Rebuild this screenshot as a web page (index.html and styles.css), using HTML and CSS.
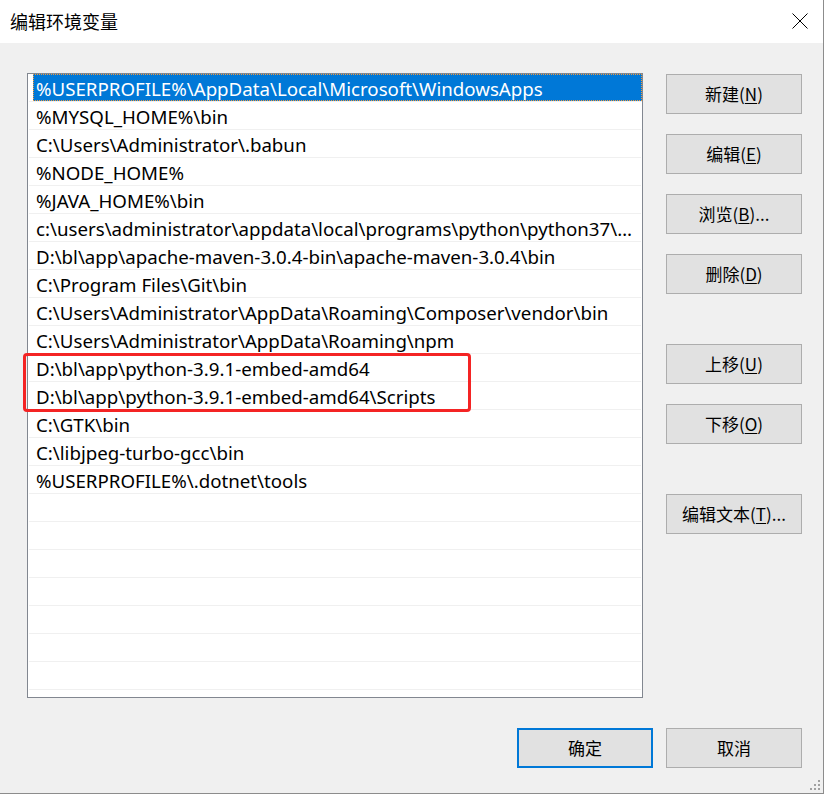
FILE: index.html
```html
<!DOCTYPE html>
<html lang="zh-CN">
<head>
<meta charset="utf-8">
<title>编辑环境变量</title>
<link rel="stylesheet" href="styles.css">
</head>
<body>
<div class="window">
  <div class="titlebar">
    <div class="title">编辑环境变量</div>
    <div class="close">
      <svg width="16" height="16" viewBox="0 0 16 16"><path d="M0.5 0.5 L15.5 15.5 M15.5 0.5 L0.5 15.5" stroke="#000" stroke-width="1" fill="none"/></svg>
    </div>
  </div>
  <div class="content">
    <div class="main">
      <div class="list">
        <div class="row selected"><div class="cell">%USERPROFILE%\AppData\Local\Microsoft\WindowsApps</div></div>
        <div class="row"><div class="cell">%MYSQL_HOME%\bin</div></div>
        <div class="row"><div class="cell">C:\Users\Administrator\.babun</div></div>
        <div class="row"><div class="cell">%NODE_HOME%</div></div>
        <div class="row"><div class="cell">%JAVA_HOME%\bin</div></div>
        <div class="row"><div class="cell">c:\users\administrator\appdata\local\programs\python\python37\Scripts</div></div>
        <div class="row"><div class="cell">D:\bl\app\apache-maven-3.0.4-bin\apache-maven-3.0.4\bin</div></div>
        <div class="row"><div class="cell">C:\Program Files\Git\bin</div></div>
        <div class="row"><div class="cell">C:\Users\Administrator\AppData\Roaming\Composer\vendor\bin</div></div>
        <div class="row"><div class="cell">C:\Users\Administrator\AppData\Roaming\npm</div></div>
        <div class="row"><div class="cell">D:\bl\app\python-3.9.1-embed-amd64</div></div>
        <div class="row"><div class="cell">D:\bl\app\python-3.9.1-embed-amd64\Scripts</div></div>
        <div class="row"><div class="cell">C:\GTK\bin</div></div>
        <div class="row"><div class="cell">C:\libjpeg-turbo-gcc\bin</div></div>
        <div class="row"><div class="cell">%USERPROFILE%\.dotnet\tools</div></div>
        <div class="row"><div class="cell"></div></div>
        <div class="row"><div class="cell"></div></div>
        <div class="row"><div class="cell"></div></div>
        <div class="row"><div class="cell"></div></div>
        <div class="row"><div class="cell"></div></div>
        <div class="row"><div class="cell"></div></div>
        <div class="row"><div class="cell"></div></div>
        <div class="row last"><div class="cell"></div></div>
      </div>
      <div class="side">
        <div class="group">
          <button class="btn">新建(<u>N</u>)</button>
          <button class="btn">编辑(<u>E</u>)</button>
          <button class="btn">浏览(<u>B</u>)...</button>
          <button class="btn">删除(<u>D</u>)</button>
        </div>
        <div class="group">
          <button class="btn">上移(<u>U</u>)</button>
          <button class="btn">下移(<u>O</u>)</button>
        </div>
        <div class="group">
          <button class="btn">编辑文本(<u>T</u>)...</button>
        </div>
      </div>
    </div>
    <div class="footer">
      <button class="btn primary">确定</button>
      <button class="btn">取消</button>
    </div>
  </div>
  <div class="highlight"></div>
  <div class="grip">
    <span class="d d1"></span><span class="d d2"></span><span class="d d3"></span>
    <span class="d d4"></span><span class="d d5"></span><span class="d d6"></span>
  </div>
</div>
</body>
</html>
```

FILE: styles.css
```css
* { box-sizing: border-box; }
html, body {
  margin: 0;
  padding: 0;
  background: #ffffff;
}
body {
  font-family: "Noto Sans", "Noto Sans CJK SC", sans-serif;
  color: #000;
}
.window {
  position: relative;
  width: 824px;
  height: 794px;
  background: #f0f0f0;
  border-right: 1px solid #8c8c8c;
  border-bottom: 1px solid #8c8c8c;
  display: flex;
  flex-direction: column;
}
.titlebar {
  height: 43px;
  background: #ffffff;
  display: flex;
  align-items: center;
  justify-content: space-between;
  padding: 0 15px 0 10px;
}
.title {
  font-family: "Noto Sans CJK SC", sans-serif;
  font-size: 18px;
  line-height: 24px;
  margin-top: -2px;
}
.close {
  width: 16px;
  height: 16px;
  display: flex;
  margin-top: -2px;
}
.content {
  flex: 1;
  padding: 30px 21px 0 27px;
  display: flex;
  flex-direction: column;
}
.main {
  display: flex;
  gap: 23px;
}
.list {
  width: 616px;
  height: 625px;
  background: #ffffff;
  border: 1px solid #828790;
  overflow: hidden;
}
.row {
  height: 28px;
  margin: 0 1px;
  padding-left: 4px;
  border-bottom: 1px solid #f0f0f0;
  display: flex;
}
.cell {
  flex: 1;
  min-width: 0;
  height: 27px;
  padding-left: 3px;
  font-size: 18.7px;
  line-height: 27px;
  white-space: nowrap;
  overflow: hidden;
  text-overflow: ellipsis;
  padding-top: 1px;
}
.row.selected { margin-right: 0; }
.row.selected .cell {
  background: #0078d7;
  color: #ffffff;
  outline: 1px dotted #f39a3c;
  outline-offset: -1px;
}
.side {
  display: flex;
  flex-direction: column;
  gap: 50px;
  padding-top: 1px;
}
.group {
  display: flex;
  flex-direction: column;
  gap: 20px;
}
.btn {
  width: 136px;
  height: 40px;
  background: #e1e1e1;
  border: 1px solid #adadad;
  border-radius: 0;
  padding: 0;
  margin: 0;
  font-family: "Noto Sans CJK SC", sans-serif;
  font-size: 17px;
  line-height: 20px;
  color: #000;
}
.btn u { text-underline-offset: 2px; }
.footer {
  margin-top: 30px;
  display: flex;
  justify-content: flex-end;
  gap: 13px;
}
.btn.primary {
  border: 2px solid #0078d7;
}
.highlight {
  position: absolute;
  left: 23px;
  top: 353px;
  width: 448px;
  height: 59px;
  border: 3px solid #f42424;
  border-radius: 4px;
  pointer-events: none;
}
.grip {
  position: absolute;
  right: 3px;
  bottom: 3px;
  width: 10px;
  height: 10px;
}
.grip .d {
  position: absolute;
  width: 2px;
  height: 2px;
  background: #a0a0a0;
}
.grip .d1 { right: 0; bottom: 0; }
.grip .d2 { right: 4px; bottom: 0; }
.grip .d3 { right: 8px; bottom: 0; }
.grip .d4 { right: 0; bottom: 4px; }
.grip .d5 { right: 4px; bottom: 4px; }
.grip .d6 { right: 0; bottom: 8px; }
```
